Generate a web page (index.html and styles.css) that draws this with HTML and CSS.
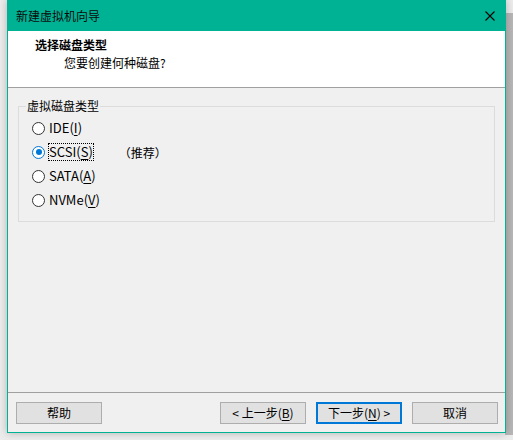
FILE: index.html
```html
<!DOCTYPE html>
<html lang="zh-CN">
<head>
<meta charset="utf-8">
<title>新建虚拟机向导</title>
<link rel="stylesheet" href="styles.css">
</head>
<body>
<div class="backdrop"></div>
<div class="window">
  <div class="titlebar">
    <span class="title">新建虚拟机向导</span>
    <svg class="close" width="10" height="10" viewBox="0 0 10 10"><path d="M0.5 0.5 L9.5 9.5 M9.5 0.5 L0.5 9.5" stroke="#000" stroke-width="1.1" fill="none"/></svg>
  </div>
  <div class="header">
    <div class="heading">选择磁盘类型</div>
    <div class="subtitle">您要创建何种磁盘?</div>
  </div>
  <div class="content">
    <div class="group">
      <span class="group-label">虚拟磁盘类型</span>
      <div class="row"><span class="radio"></span><span class="label">IDE(<u>I</u>)</span></div>
      <div class="row"><span class="radio checked"></span><span class="label focus">SCSI(<u>S</u>)</span><span class="hint">（推荐）</span></div>
      <div class="row"><span class="radio"></span><span class="label">SATA(<u>A</u>)</span></div>
      <div class="row"><span class="radio"></span><span class="label">NVMe(<u>V</u>)</span></div>
    </div>
  </div>
  <div class="footer">
    <button class="btn">帮助</button>
    <div class="spacer"></div>
    <button class="btn">&lt; 上一步(<u>B</u>)</button>
    <button class="btn default">下一步(<u>N</u>) &gt;</button>
    <button class="btn">取消</button>
  </div>
</div>
</body>
</html>
```
FILE: styles.css
```css
html, body {
  margin: 0;
  padding: 0;
}
body {
  width: 513px;
  height: 440px;
  overflow: hidden;
  background: #ececec;
  position: relative;
  font-family: "Noto Sans CJK SC", "Noto Sans", sans-serif;
  font-size: 12px;
  color: #000;
}
.backdrop {
  position: absolute;
  left: 505px;
  top: 13px;
  width: 8px;
  height: 422px;
  background: #b7b7b7;
}
.window {
  position: relative;
  margin-left: 7px;
  width: 497px;
  height: 432px;
  border: 1px solid #00b294;
  border-top: 0;
  display: flex;
  flex-direction: column;
  background: #f0f0f0;
  box-shadow: 0 0 8px rgba(0, 0, 0, 0.25);
}
.titlebar {
  height: 31px;
  background: #00b294;
  display: flex;
  align-items: center;
  padding: 0 10px 0 8px;
  flex: none;
}
.title {
  flex: 1;
  line-height: 16px;
  color: #0a0a0a;
}
.close {
  display: block;
}
.header {
  height: 56px;
  background: #fff;
  border-bottom: 1px solid #a0a0a0;
  padding: 6px 0 0 27px;
  box-sizing: border-box;
  height: 57px;
  flex: none;
}
.heading {
  font-weight: bold;
  line-height: 16px;
}
.subtitle {
  line-height: 16px;
  margin-top: 2px;
  padding-left: 29px;
}
.content {
  height: 304px;
  padding: 18px 10px 0 10px;
  box-sizing: border-box;
  flex: none;
}
.group {
  position: relative;
  border: 1px solid #dcdcdc;
  padding: 9px 0 9px 13px;
}
.group-label {
  position: absolute;
  left: 7px;
  top: -9px;
  line-height: 16px;
  padding: 0 1px;
  background: #f0f0f0;
}
.row {
  height: 24px;
  display: flex;
  align-items: center;
}
.radio {
  width: 11px;
  height: 11px;
  border: 1px solid #333;
  border-radius: 50%;
  background: #fff;
  margin-right: 3px;
  position: relative;
  flex: none;
}
.radio.checked {
  border-color: #0078d7;
}
.radio.checked::after {
  content: "";
  position: absolute;
  left: 2.5px;
  top: 2.5px;
  width: 6px;
  height: 6px;
  border-radius: 50%;
  background: #0078d7;
}
.label {
  line-height: 14px;
  padding: 1px 0;
  border: 1px dotted transparent;
  font-size: 13px;
}
.label.focus {
  border-color: #000;
}
.hint {
  margin-left: 25px;
}
u {
  text-decoration-thickness: 1px;
  text-underline-offset: 2px;
}
.footer {
  border-top: 1px solid #a0a0a0;
  height: 40px;
  box-sizing: border-box;
  padding: 9px 7px 0 8px;
  display: flex;
  align-items: flex-start;
  gap: 10px;
  flex: none;
}
.spacer {
  flex: 1;
}
.btn {
  width: 86px;
  height: 22px;
  background: #e1e1e1;
  border: 1px solid #adadad;
  font-family: inherit;
  font-size: 12px;
  color: #000;
  padding: 0;
  margin: 0;
  line-height: 18px;
}
.btn.default {
  border: 2px solid #0078d7;
}
```
